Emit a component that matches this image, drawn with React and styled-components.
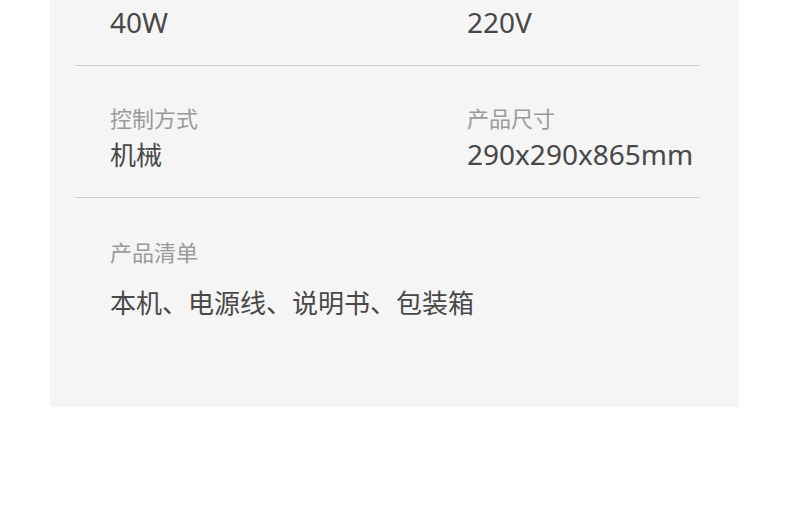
import React from "react";
import styled, { createGlobalStyle } from "styled-components";

const GlobalStyle = createGlobalStyle`
  html, body {
    margin: 0;
    padding: 0;
    background: #ffffff;
    overflow: hidden;
  }
`;

const Page = styled.div`
  width: 790px;
  height: 522px;
  overflow: hidden;
  background: #ffffff;
`;

const Panel = styled.section`
  margin-left: 50px;
  width: 689px;
  background: #f5f5f5;
  padding-bottom: 87px;
`;

const SpecList = styled.div`
  margin: 0 39px 0 25px;
`;

// first row is scrolled off at the top, only its values show
const SpecRow = styled.div`
  display: grid;
  grid-template-columns: ${(p) => (p.$full ? "1fr" : "357px 1fr")};
  padding: ${(p) =>
    p.$full ? "39px 0 0 35px" : p.$top ? "4px 0 25px 35px" : "37px 0 25px 35px"};
  border-bottom: ${(p) => (p.$last ? "none" : "1px solid #cfcfcf")};
`;

const Spec = styled.div`
  display: flex;
  flex-direction: column;
`;

const Label = styled.span`
  font-family: "Noto Sans CJK SC", "Noto Sans", sans-serif;
  font-size: 22px;
  line-height: 28px;
  color: #9a9a9a;
`;

const Value = styled.span`
  margin-top: ${(p) => (p.$list ? "19px" : p.$bare ? "0" : "5px")};
  font-family: ${(p) =>
    p.$latin
      ? `"Noto Sans", "Noto Sans CJK SC", sans-serif`
      : `"Noto Sans CJK SC", "Noto Sans", sans-serif`};
  font-size: ${(p) => (p.$latin ? "28px" : "26px")};
  line-height: 36px;
  color: #484848;
  white-space: nowrap;
`;

const specs = [
  { label: "控制方式", value: "机械" },
  { label: "产品尺寸", value: "290x290x865mm", latin: true },
];

export default function App() {
  return (
    <Page>
      <GlobalStyle />
      <Panel>
        <SpecList>
          <SpecRow $top>
            <Spec>
              <Value $latin $bare>40W</Value>
            </Spec>
            <Spec>
              <Value $latin $bare>220V</Value>
            </Spec>
          </SpecRow>
          <SpecRow>
            {specs.map((s) => (
              <Spec key={s.label}>
                <Label>{s.label}</Label>
                <Value $latin={s.latin}>{s.value}</Value>
              </Spec>
            ))}
          </SpecRow>
          <SpecRow $full $last>
            <Spec>
              <Label>产品清单</Label>
              <Value $list>本机、电源线、说明书、包装箱</Value>
            </Spec>
          </SpecRow>
        </SpecList>
      </Panel>
    </Page>
  );
}
